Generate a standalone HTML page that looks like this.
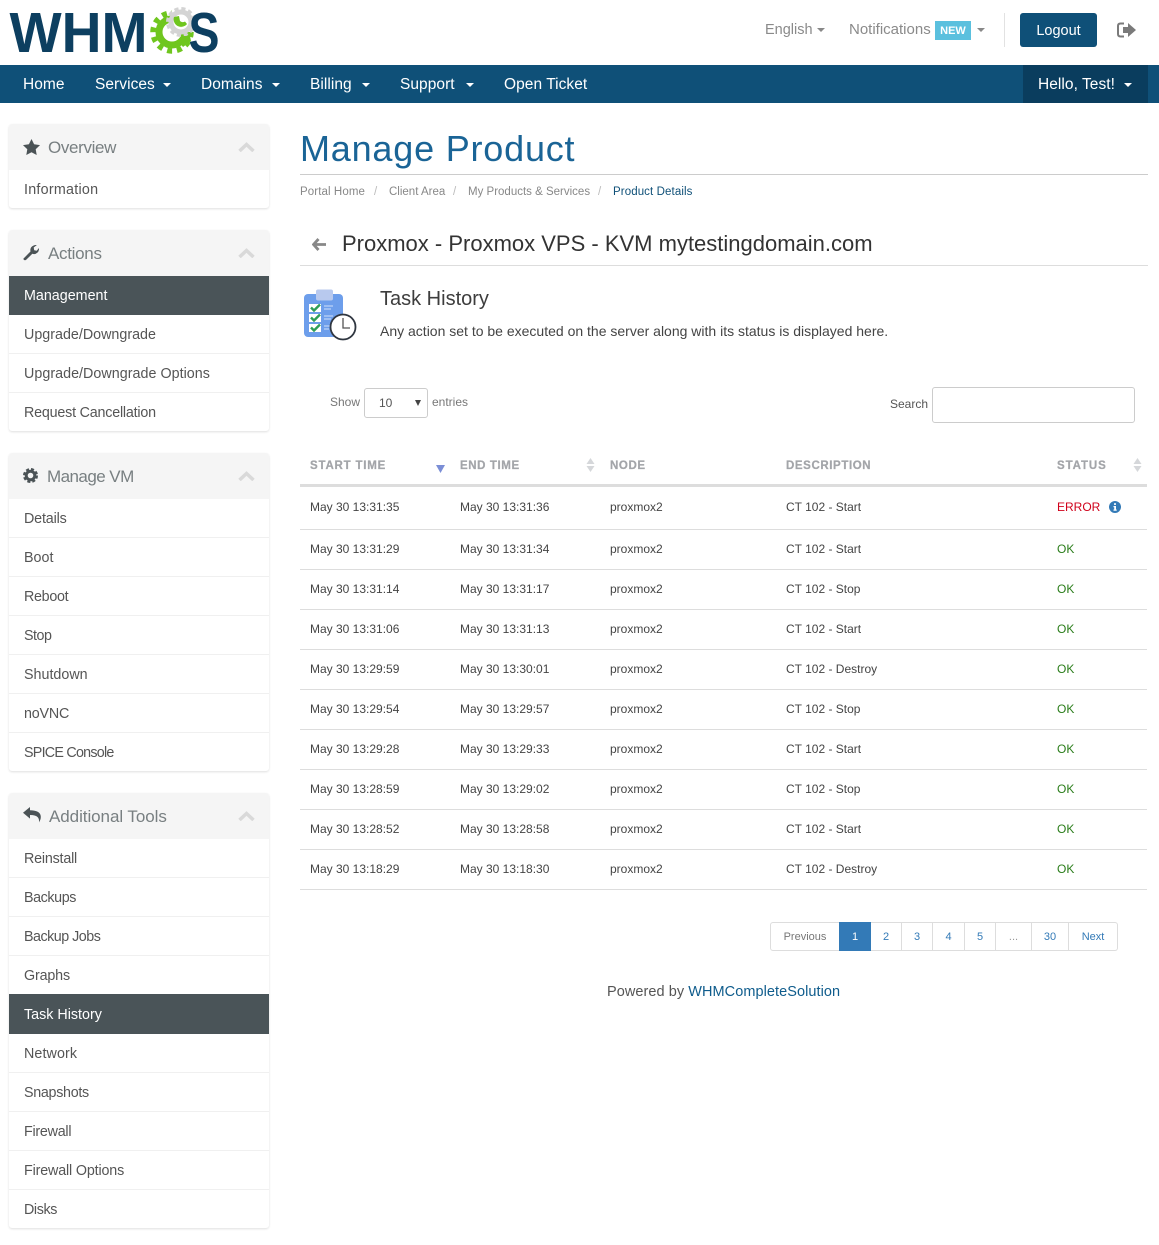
<!DOCTYPE html>
<html><head><meta charset="utf-8"><title>Manage Product</title>
<style>
html,body{margin:0;padding:0;background:#fff}
body{position:relative;width:1159px;height:1245px;overflow:hidden;font-family:"Liberation Sans",sans-serif;color:#333}
.a{position:absolute;white-space:nowrap}
svg{position:absolute;display:block}
.nav{top:75px;height:20px;line-height:20px;font-size:15.5px;letter-spacing:.05px;color:#fff}
.car{position:absolute;width:0;height:0;border-left:4px solid transparent;border-right:4px solid transparent;border-top:4px solid currentColor}
.panel{position:absolute;left:9px;width:260px;background:#fff;box-shadow:0 1px 2px rgba(0,0,0,.13);border-radius:3px}
.head{position:relative;height:46px;background:#f5f5f5;border-radius:3px 3px 0 0}
.head span{position:absolute;top:13px;line-height:22px;font-size:17px;color:#787f81;white-space:nowrap}
.head svg.ch{left:229px;top:18px}
.it{height:38px;line-height:40px;padding-left:15px;font-size:14.3px;color:#555;border-bottom:1px solid #f0f0f0;white-space:nowrap}
.it:last-child{border-bottom:0}
.it.on{background:#4a5458;color:#fff;border-bottom-color:#4a5458}
.bc{top:185px;line-height:14px;font-size:11.5px;color:#888}
.th{top:459px;line-height:14px;font-size:11.5px;font-weight:bold;color:#a3a5a9;letter-spacing:.6px;-webkit-text-stroke:.25px #a3a5a9}
.c{font-size:12px;line-height:16px;color:#444}
.ln{position:absolute;left:300px;width:847px;height:1px;background:#ddd}
.pg{position:absolute;top:922px;height:27px;line-height:29px;border:1px solid #ddd;border-left:0;text-align:center;font-size:11px;color:#337ab7;background:#fff}
</style></head><body>

<!-- Logo -->
<svg style="left:0;top:0" width="240" height="62" viewBox="0 0 240 62">
<text x="9.500" y="52" font-family="Liberation Sans" font-weight="bold" font-size="57" fill="#0d3f60" textLength="138" lengthAdjust="spacingAndGlyphs">WHM</text>
<circle cx="172" cy="32" r="13" fill="none" stroke="#6fc61e" stroke-width="7"/>
<circle cx="172" cy="32" r="19" fill="none" stroke="#6fc61e" stroke-width="5.500" stroke-dasharray="5 4.900"/>
<path d="M172 32 L205 16 L198 -6 L172 -6Z" fill="#fff"/>
<path d="M172 32 L200 32 L200 18Z" fill="#fff"/>
<circle cx="181" cy="22" r="10" fill="none" stroke="#d4d4d4" stroke-width="5"/>
<circle cx="181" cy="22" r="13" fill="none" stroke="#d4d4d4" stroke-width="4" stroke-dasharray="4 2.800"/>
<path d="M174 17a7.500 7.500 0 0 0 13 7l-2-2.500a4 4 0 0 1-5-.5l-1-5z" fill="#6fc61e"/>
<path d="M190 36l-6 0a14 14 0 0 1-5 6l4 5 8-6z" fill="#6fc61e"/>
<text x="188.500" y="52" font-family="Liberation Sans" font-weight="bold" font-size="57" fill="#0d3f60" textLength="31" lengthAdjust="spacingAndGlyphs">S</text>
</svg>

<!-- Top right -->
<div class="a" style="left:765px;top:21px;font-size:14.5px;line-height:18px;color:#8a8a8a">English</div>
<div class="car" style="left:817px;top:28px;color:#888"></div>
<div class="a" style="left:849px;top:21px;font-size:15px;line-height:18px;color:#8a8a8a">Notifications</div>
<div class="a" style="left:935px;top:21px;width:36px;height:19px;line-height:20px;text-align:center;background:#5bc0de;color:#fff;font-size:11px;font-weight:bold">NEW</div>
<div class="car" style="left:977px;top:28px;color:#888"></div>
<div class="a" style="left:1004px;top:13px;width:1px;height:34px;background:#e2e2e2"></div>
<div class="a" style="left:1020px;top:13px;width:77px;height:34px;line-height:36px;text-align:center;background:#0f5078;border-radius:3px;color:#fff;font-size:14.500px">Logout</div>
<svg style="left:1117px;top:22px" width="19" height="16" viewBox="0 0 19 16"><path d="M7 1.500H3.500Q1 1.500 1 4V12Q1 14.500 3.500 14.500H7" fill="none" stroke="#7a7a7a" stroke-width="2"/><path d="M6 5h5V1l8 7-8 7v-4H6z" fill="#7a7a7a"/></svg>

<!-- Nav -->
<div class="a" style="left:0;top:65px;width:1159px;height:38px;background:#0f5078"></div>
<div class="a" style="left:1023px;top:65px;width:125px;height:38px;background:#0a3d5e"></div>
<div class="a nav" style="left:23px">Home</div>
<div class="a nav" style="left:95px">Services</div><div class="car" style="left:163px;top:83px;color:#fff"></div>
<div class="a nav" style="left:201px">Domains</div><div class="car" style="left:272px;top:83px;color:#fff"></div>
<div class="a nav" style="left:310px">Billing</div><div class="car" style="left:362px;top:83px;color:#fff"></div>
<div class="a nav" style="left:400px">Support</div><div class="car" style="left:466px;top:83px;color:#fff"></div>
<div class="a nav" style="left:504px">Open Ticket</div>
<div class="a nav" style="left:1038px">Hello, Test!</div><div class="car" style="left:1124px;top:83px;color:#fff"></div>

<!-- Sidebar -->
<div class="panel" style="top:124px"><div class="head">
<svg style="left:14px;top:15px" width="17" height="16" viewBox="0 0 17 16"><path d="M8.500 0l2.600 5.300 5.900.8-4.300 4.100 1 5.800-5.200-2.700-5.200 2.700 1-5.800L0 6.100l5.900-.8z" fill="#4b5356"/></svg>
<span style="left:39px;letter-spacing:-.35px">Overview</span><svg class="ch" width="17" height="10" viewBox="0 0 17 10"><path d="M1.500 9L8.500 2.500 15.500 9" fill="none" stroke="#d9d9d9" stroke-width="3.500"/></svg></div>
<div class="it" style="letter-spacing:.25px">Information</div></div>

<div class="panel" style="top:230px"><div class="head">
<svg style="left:14px;top:15px" width="16" height="16" viewBox="0 0 16 16"><path d="M1.300 12.700L7.500 6.500Q6.800 3 9.300 1.200 11.500-.3 14-.1L10.700 2.500 11.200 5.200 13.700 5.800 16 3Q16.300 6 14.300 7.800 12 9.800 9.300 8.800L3.200 14.800Q2 15.800.8 14.800-.2 13.700 1.300 12.700z" fill="#4b5356"/></svg>
<span style="left:39px;letter-spacing:-.3px">Actions</span><svg class="ch" width="17" height="10" viewBox="0 0 17 10"><path d="M1.500 9L8.500 2.500 15.500 9" fill="none" stroke="#d9d9d9" stroke-width="3.500"/></svg></div>
<div class="it on">Management</div><div class="it">Upgrade/Downgrade</div><div class="it" style="letter-spacing:.03px">Upgrade/Downgrade Options</div><div class="it" style="letter-spacing:-.2px">Request Cancellation</div></div>

<div class="panel" style="top:453px"><div class="head">
<svg style="left:14px;top:15px" width="15" height="15" viewBox="0 0 15 15"><circle cx="7.500" cy="7.500" r="4.300" fill="none" stroke="#4b5356" stroke-width="3"/><circle cx="7.500" cy="7.500" r="6.300" fill="none" stroke="#4b5356" stroke-width="2.400" stroke-dasharray="3 2"/></svg>
<span style="left:38px;letter-spacing:-.55px">Manage VM</span><svg class="ch" width="17" height="10" viewBox="0 0 17 10"><path d="M1.500 9L8.500 2.500 15.500 9" fill="none" stroke="#d9d9d9" stroke-width="3.500"/></svg></div>
<div class="it" style="letter-spacing:-.15px">Details</div><div class="it">Boot</div><div class="it" style="letter-spacing:-.3px">Reboot</div><div class="it" style="letter-spacing:-.5px">Stop</div><div class="it">Shutdown</div><div class="it" style="letter-spacing:-.2px">noVNC</div><div class="it" style="letter-spacing:-.75px">SPICE Console</div></div>

<div class="panel" style="top:793px"><div class="head">
<svg style="left:14px;top:14px" width="18" height="16" viewBox="0 0 18 16"><path d="M7 0L0 5.800l7 5.800V8Q13 8 15 10.500 16.500 12.500 16 15.500 18.500 11.500 17.500 8 16 3.500 7 3.300z" fill="#4b5356"/></svg>
<span style="left:40px;letter-spacing:-.06px">Additional Tools</span><svg class="ch" width="17" height="10" viewBox="0 0 17 10"><path d="M1.500 9L8.500 2.500 15.500 9" fill="none" stroke="#d9d9d9" stroke-width="3.500"/></svg></div>
<div class="it" style="letter-spacing:-.2px">Reinstall</div><div class="it" style="letter-spacing:-.4px">Backups</div><div class="it" style="letter-spacing:-.5px">Backup Jobs</div><div class="it" style="letter-spacing:-.15px">Graphs</div><div class="it on" style="box-shadow:0 -1px 0 #4a5458">Task History</div><div class="it" style="letter-spacing:.1px">Network</div><div class="it" style="letter-spacing:-.3px">Snapshots</div><div class="it" style="letter-spacing:-.25px">Firewall</div><div class="it" style="letter-spacing:-.15px">Firewall Options</div><div class="it" style="letter-spacing:-.4px">Disks</div></div>

<!-- Main heading -->
<div class="a" style="left:300px;top:127px;font-size:36px;line-height:44px;letter-spacing:.8px;color:#1a6496">Manage Product</div>
<div class="a" style="left:300px;top:174px;width:848px;height:1px;background:#ccc"></div>
<div class="a bc" style="left:300px;letter-spacing:.1px">Portal Home</div><div class="a bc" style="left:374px;color:#bbb">/</div>
<div class="a bc" style="left:389px">Client Area</div><div class="a bc" style="left:453px;color:#bbb">/</div>
<div class="a bc" style="left:468px">My Products &amp; Services</div><div class="a bc" style="left:598px;color:#bbb">/</div>
<div class="a bc" style="left:613px;color:#0f5078;letter-spacing:.1px">Product Details</div>

<svg style="left:312px;top:238px" width="14" height="13" viewBox="0 0 14 13"><path d="M6.500 1L1.500 6.500 6.500 12M2 6.500H14" fill="none" stroke="#888" stroke-width="2.800"/></svg>
<div class="a" style="left:342px;top:230px;font-size:22px;line-height:28px;color:#333">Proxmox - Proxmox VPS - KVM mytestingdomain.com</div>
<div class="a" style="left:300px;top:265px;width:848px;height:1px;background:#ddd"></div>

<!-- Task icon -->
<svg style="left:303px;top:288px" width="54" height="54" viewBox="0 0 54 54">
<rect x="1" y="6" width="39" height="43" rx="4" fill="#6d9eeb"/>
<rect x="13" y="1.500" width="17" height="11" rx="2" fill="#b8c9ee"/>
<rect x="6" y="16" width="12" height="8" fill="#fff"/><rect x="6" y="26" width="12" height="8" fill="#fff"/><rect x="6" y="36" width="12" height="8" fill="#fff"/>
<path d="M8 19.500l3 3 6-6M8 29.500l3 3 6-6M8 39.500l3 3 6-6" fill="none" stroke="#2e9e57" stroke-width="2.400"/>
<path d="M21 18h9M21 21h7M21 28h9M21 31h7M21 38h6M21 41h5" stroke="#cfe0fb" stroke-width="1"/>
<circle cx="40" cy="39" r="12.500" fill="#fff" stroke="#2f3640" stroke-width="1.800"/>
<path d="M40 30V40H47" fill="none" stroke="#555" stroke-width="1.300"/>
</svg>
<div class="a" style="left:380px;top:286px;font-size:20px;line-height:26px;color:#3d3d3d">Task History</div>
<div class="a" style="left:380px;top:322px;font-size:14px;line-height:18px;color:#444">Any action set to be executed on the server along with its status is displayed here.</div>

<!-- Controls -->
<div class="a" style="left:330px;top:394px;font-size:12px;line-height:16px;color:#777">Show</div>
<div class="a" style="left:364px;top:388px;width:62px;height:28px;border:1px solid #ccc;border-radius:3px;background:#fff"></div>
<div class="a" style="left:379px;top:395px;font-size:12px;line-height:16px;color:#555">10</div>
<div class="a" style="left:415px;top:400px;width:0;height:0;border-left:3px solid transparent;border-right:3px solid transparent;border-top:6px solid #444"></div>
<div class="a" style="left:432px;top:394px;font-size:12px;line-height:16px;color:#777">entries</div>
<div class="a" style="left:890px;top:396px;font-size:12px;line-height:16px;color:#555">Search</div>
<div class="a" style="left:932px;top:387px;width:201px;height:34px;border:1px solid #ccc;border-radius:3px;background:#fff"></div>

<!-- Table head -->
<div class="a th" style="left:310px;letter-spacing:.8px">START TIME</div>
<div class="a th" style="left:460px">END TIME</div>
<div class="a th" style="left:610px">NODE</div>
<div class="a th" style="left:786px">DESCRIPTION</div>
<div class="a th" style="left:1057px;letter-spacing:.9px">STATUS</div>
<svg style="left:436px;top:465px" width="9" height="8" viewBox="0 0 9 8"><path d="M0 0H9L4.500 8z" fill="#7b8ed6"/></svg>
<svg style="left:586px;top:458px" width="9" height="14" viewBox="0 0 9 14"><path d="M4.500 0L8.500 6H.5zM.5 8H8.500L4.500 14z" fill="#d5d7da"/></svg>
<svg style="left:1133px;top:458px" width="9" height="14" viewBox="0 0 9 14"><path d="M4.500 0L8.500 6H.5zM.5 8H8.500L4.500 14z" fill="#d5d7da"/></svg>
<div class="a" style="left:300px;top:484px;width:847px;height:3px;background:#ddd"></div>

<!-- Rows -->
<div class="a c" style="left:310px;top:499px">May 30 13:31:35</div><div class="a c" style="left:460px;top:499px">May 30 13:31:36</div><div class="a c" style="left:610px;top:499px">proxmox2</div><div class="a c" style="left:786px;top:499px">CT 102 - Start</div><div class="a c" style="left:1057px;top:499px;color:#d0021b">ERROR</div>
<svg style="left:1109px;top:501px" width="12" height="12" viewBox="0 0 12 12"><circle cx="6" cy="6" r="6" fill="#337ab7"/><path d="M5 2.200h2v1.700H5zM4.500 5h2.500v3.500h.7v1.200H4.500V8.500h.7V6.200h-.7z" fill="#fff"/></svg>
<div class="ln" style="top:529px"></div>
<div class="a c" style="left:310px;top:541px">May 30 13:31:29</div><div class="a c" style="left:460px;top:541px">May 30 13:31:34</div><div class="a c" style="left:610px;top:541px">proxmox2</div><div class="a c" style="left:786px;top:541px">CT 102 - Start</div><div class="a c" style="left:1057px;top:541px;color:#2a7d1a">OK</div>
<div class="ln" style="top:569px"></div>
<div class="a c" style="left:310px;top:581px">May 30 13:31:14</div><div class="a c" style="left:460px;top:581px">May 30 13:31:17</div><div class="a c" style="left:610px;top:581px">proxmox2</div><div class="a c" style="left:786px;top:581px">CT 102 - Stop</div><div class="a c" style="left:1057px;top:581px;color:#2a7d1a">OK</div>
<div class="ln" style="top:609px"></div>
<div class="a c" style="left:310px;top:621px">May 30 13:31:06</div><div class="a c" style="left:460px;top:621px">May 30 13:31:13</div><div class="a c" style="left:610px;top:621px">proxmox2</div><div class="a c" style="left:786px;top:621px">CT 102 - Start</div><div class="a c" style="left:1057px;top:621px;color:#2a7d1a">OK</div>
<div class="ln" style="top:649px"></div>
<div class="a c" style="left:310px;top:661px">May 30 13:29:59</div><div class="a c" style="left:460px;top:661px">May 30 13:30:01</div><div class="a c" style="left:610px;top:661px">proxmox2</div><div class="a c" style="left:786px;top:661px">CT 102 - Destroy</div><div class="a c" style="left:1057px;top:661px;color:#2a7d1a">OK</div>
<div class="ln" style="top:689px"></div>
<div class="a c" style="left:310px;top:701px">May 30 13:29:54</div><div class="a c" style="left:460px;top:701px">May 30 13:29:57</div><div class="a c" style="left:610px;top:701px">proxmox2</div><div class="a c" style="left:786px;top:701px">CT 102 - Stop</div><div class="a c" style="left:1057px;top:701px;color:#2a7d1a">OK</div>
<div class="ln" style="top:729px"></div>
<div class="a c" style="left:310px;top:741px">May 30 13:29:28</div><div class="a c" style="left:460px;top:741px">May 30 13:29:33</div><div class="a c" style="left:610px;top:741px">proxmox2</div><div class="a c" style="left:786px;top:741px">CT 102 - Start</div><div class="a c" style="left:1057px;top:741px;color:#2a7d1a">OK</div>
<div class="ln" style="top:769px"></div>
<div class="a c" style="left:310px;top:781px">May 30 13:28:59</div><div class="a c" style="left:460px;top:781px">May 30 13:29:02</div><div class="a c" style="left:610px;top:781px">proxmox2</div><div class="a c" style="left:786px;top:781px">CT 102 - Stop</div><div class="a c" style="left:1057px;top:781px;color:#2a7d1a">OK</div>
<div class="ln" style="top:809px"></div>
<div class="a c" style="left:310px;top:821px">May 30 13:28:52</div><div class="a c" style="left:460px;top:821px">May 30 13:28:58</div><div class="a c" style="left:610px;top:821px">proxmox2</div><div class="a c" style="left:786px;top:821px">CT 102 - Start</div><div class="a c" style="left:1057px;top:821px;color:#2a7d1a">OK</div>
<div class="ln" style="top:849px"></div>
<div class="a c" style="left:310px;top:861px">May 30 13:18:29</div><div class="a c" style="left:460px;top:861px">May 30 13:18:30</div><div class="a c" style="left:610px;top:861px">proxmox2</div><div class="a c" style="left:786px;top:861px">CT 102 - Destroy</div><div class="a c" style="left:1057px;top:861px;color:#2a7d1a">OK</div>
<div class="ln" style="top:889px"></div>

<!-- Pagination -->
<div class="pg" style="left:770px;width:68px;border-left:1px solid #ddd;border-radius:3px 0 0 3px;color:#777">Previous</div>
<div class="pg" style="left:839px;width:32px;background:#337ab7;border-color:#337ab7;color:#fff">1</div>
<div class="pg" style="left:871px;width:30px">2</div>
<div class="pg" style="left:902px;width:30px">3</div>
<div class="pg" style="left:933px;width:31px">4</div>
<div class="pg" style="left:965px;width:30px">5</div>
<div class="pg" style="left:996px;width:35px;color:#999">...</div>
<div class="pg" style="left:1032px;width:36px">30</div>
<div class="pg" style="left:1069px;width:48px;border-radius:0 3px 3px 0">Next</div>

<div class="a" style="left:607px;top:983px;font-size:14.5px;line-height:18px;letter-spacing:.06px;color:#555">Powered by <span style="color:#0f5c8c">WHMCompleteSolution</span></div>
</body></html>
